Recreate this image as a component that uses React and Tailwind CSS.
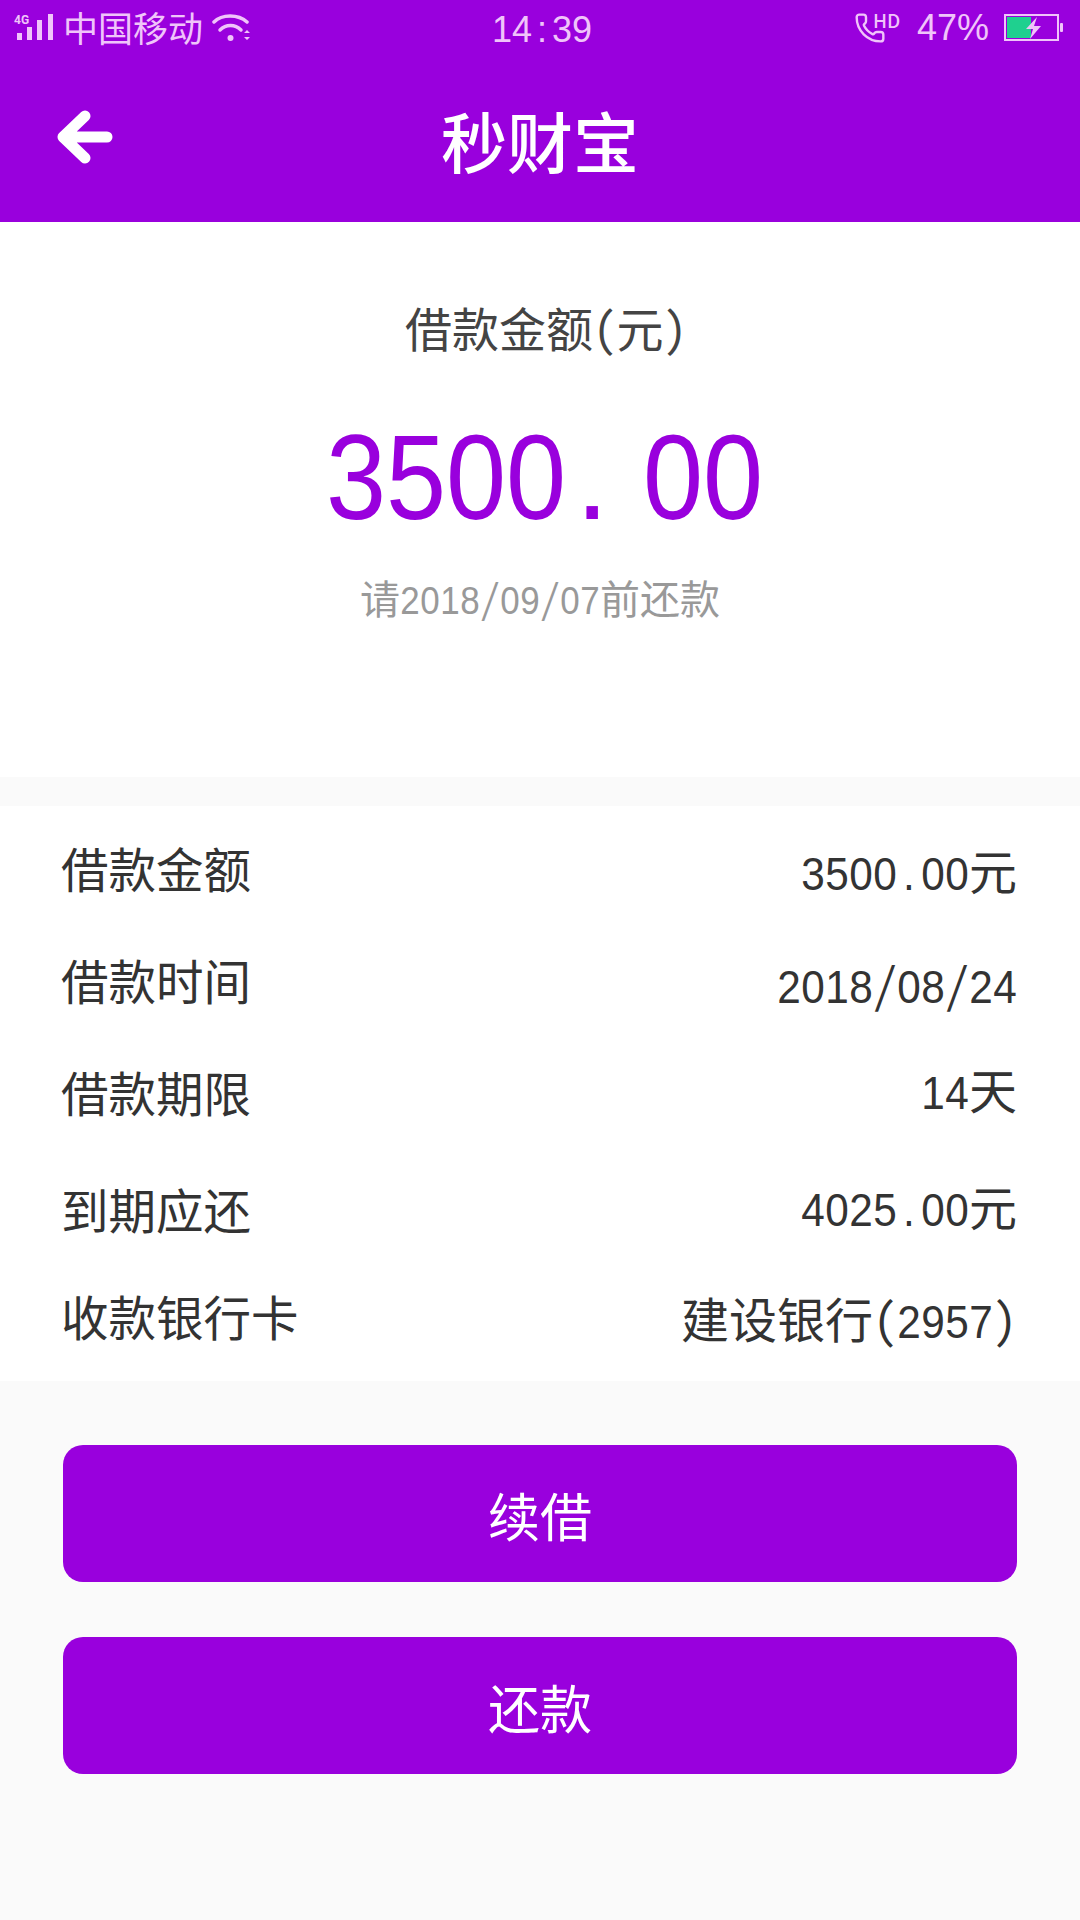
import { Phone } from 'lucide-react';

const rows = [
  { label: '借款金额', value: '3500.00元' },
  { label: '借款时间', value: '2018/08/24', valueCls: 'translate-y-[4px]' },
  { label: '借款期限', value: '14天', valueCls: '-translate-y-[2px]' },
  { label: '到期应还', value: '4025.00元', labelCls: 'translate-y-[5px]' },
  { label: '收款银行卡', value: '建设银行(2957)' },
];

// digits sit in fixed half-width cells, like the monospaced numerals of the phone's font
const Cells = ({ text, cell }) => (
  <>
    {text.split('').map((c, i) =>
      /[0-9.:]/.test(c) ? (
        <span key={i} className={`inline-flex justify-center font-["Liberation_Sans",sans-serif] ${cell}`}>{c}</span>
      ) : c
    )}
  </>
);

const Signal = () => (
  <svg width="40" height="30" viewBox="0 0 40 30" className="shrink-0">
    <text x="0" y="11" fontSize="12" fontWeight="700" fill="#f0c4fa" fontFamily="Roboto">4G</text>
    <rect x="3" y="20" width="5" height="7" fill="#f0c4fa" />
    <rect x="13" y="14" width="5" height="13" fill="#f0c4fa" />
    <rect x="23" y="7" width="5" height="20" fill="#f0c4fa" />
    <rect x="34" y="1" width="5" height="26" fill="#f0c4fa" />
  </svg>
);

const Wifi = () => (
  <svg width="38" height="32" viewBox="0 0 38 32" fill="none" stroke="#f0c4fa" strokeWidth="3.500" strokeLinecap="round" className="shrink-0">
    <path d="M2 10 C10 2 26 2 35 10" />
    <path d="M8 18 C14 12 23 12 29 18" />
    <circle cx="18.500" cy="26" r="3" fill="#f0c4fa" stroke="none" />
    <path d="M32 21 L35 18 L38 21 Z M32 25 L38 25 L35 28 Z" fill="#f0c4fa" stroke="none" />
  </svg>
);

const Battery = () => (
  <svg width="60" height="28" viewBox="0 0 60 28" className="shrink-0">
    <rect x="1" y="1" width="53" height="25" fill="none" stroke="#f0c4fa" strokeWidth="2" />
    <rect x="3" y="3" width="24" height="21" fill="#1fd08f" />
    <rect x="56" y="9" width="3" height="9" rx="1" fill="#f0c4fa" />
    <path d="M33 3 L22 15 L29 15 L26 25 L37 12 L30 12 Z" fill="#f0c4fa" />
  </svg>
);

export default function App() {
  return (
    <div className='w-[1080px] h-[1920px] flex flex-col bg-[#fafafa] font-["Noto_Sans_CJK_SC",sans-serif]'>
      <header className="relative h-[222px] bg-[#9900dd] shrink-0">
        <div className="h-[56px] flex items-center justify-between pl-[14px] pr-[16px] text-[#f0c4fa]">
          <div className="flex items-center gap-[9px] w-[300px]">
            <Signal />
            <span className="text-[35px] leading-none -translate-y-[2px]">中国移动</span>
            <Wifi />
          </div>
          <span className="leading-none translate-x-[3px] translate-y-[2px]"><Cells text="14:39" cell="w-[20px] text-[36px]" /></span>
          <div className="flex items-center justify-end gap-[12px] w-[300px]">
            <div className="relative w-[44px] h-[32px] mr-[7px]">
              <Phone size={32} strokeWidth={1.8} />
              <span className="absolute left-[19px] -top-[2px] text-[19px] leading-none font-medium">HD</span>
            </div>
            <span className='text-[36px] leading-none mr-[3px] font-["Liberation_Sans",sans-serif]'>47%</span>
            <Battery />
          </div>
        </div>
        <div className="flex items-center h-[166px] relative">
          <svg width="60" height="60" viewBox="0 0 60 60" fill="none" stroke="#ffffff" strokeWidth="11" strokeLinecap="round" strokeLinejoin="round" className="ml-[54px]">
            <path d="M31 7 L9 28 L31 49 M9 28 L53 28" />
          </svg>
          <h1 className="absolute left-0 right-0 text-center text-white text-[66px] leading-none font-medium">秒财宝</h1>
        </div>
      </header>

      <section className='h-[555px] bg-white flex flex-col items-center shrink-0 [font-feature-settings:"hwid"]'>
        <p className="mt-[75px] ml-[12px] text-[47px] leading-[60px] text-[#444444]">借款金额(元)</p>
        <p className='mt-[50px] ml-[8px] text-[120px] leading-[140px] text-[#9900dd] font-["Liberation_Sans",sans-serif] flex'>
          <Cells text="3500" cell="w-[60px] scale-x-[0.9]" />
          <span className="w-[77px] pl-[10px]">.</span>
          <Cells text="00" cell="w-[60px] scale-x-[0.9]" />
        </p>
        <p className="mt-[25px] text-[40px] leading-[50px] text-[#999999]"><Cells text="请2018/09/07前还款" cell="w-[20px] text-[38px] scale-x-[0.92]" /></p>
      </section>

      <section className='mt-[29px] h-[575px] bg-white shrink-0 pl-[61px] pr-[63px] pt-[6px] [font-feature-settings:"hwid"]'>
        {rows.map(r => (
          <div key={r.label} className="flex items-center justify-between h-[112px]">
            <span className={`text-[47.5px] leading-none text-[#333333] ${r.labelCls || ''}`}>{r.label}</span>
            <span className={`text-[48px] leading-none text-[#333333] ${r.valueCls || 'translate-y-[3px]'}`}><Cells text={r.value} cell="w-[24px] text-[46px] scale-x-[0.92]" /></span>
          </div>
        ))}
      </section>

      <div className="mt-[64px] px-[63px] flex flex-col gap-[55px]">
        <button className="h-[137px] rounded-[20px] bg-[#9900dd] text-white text-[52px] pt-[2px]">续借</button>
        <button className="h-[137px] rounded-[20px] bg-[#9900dd] text-white text-[52px] pt-[2px]">还款</button>
      </div>
    </div>
  );
}
